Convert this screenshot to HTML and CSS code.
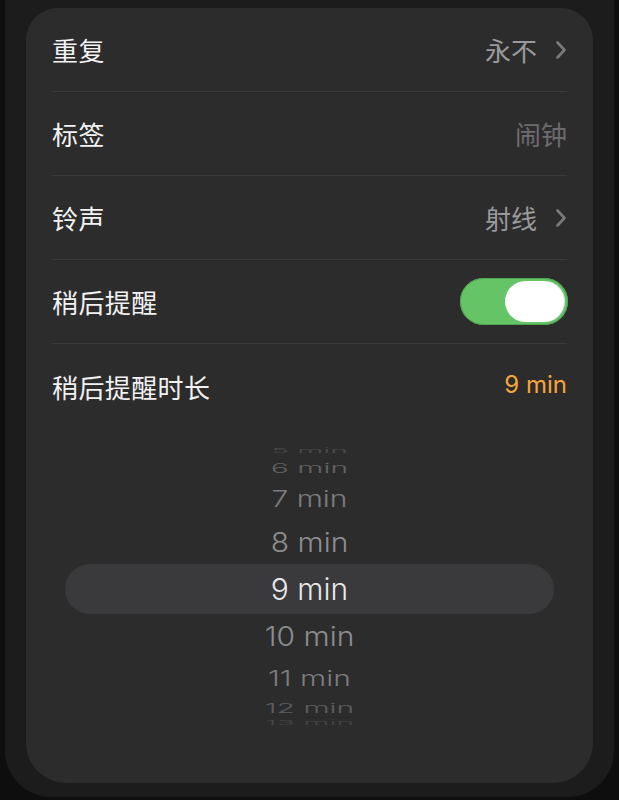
FILE: index.html
```html
<!DOCTYPE html>
<html lang="zh-CN">
    <head>
        <meta charset="UTF-8">
        <meta name="viewport" content="width=device-width, initial-scale=1.0">
        <title>编辑闹钟</title>
        <link rel="stylesheet" href="styles.css">
    </head>
    <body>
        <div class="frame">
            <div class="card">
                <div class="list">
                    <div class="row">
                        <span class="label">重复</span>
                        <span class="value">永不
                            <svg class="chevron" width="12" height="20" viewBox="0 0 12 20"><path d="M2.5 2.5 L9.5 10 L2.5 17.5" fill="none" stroke="#7a7a7c" stroke-width="2.6" stroke-linecap="round" stroke-linejoin="round"/></svg>
                        </span>
                    </div>
                    <div class="row">
                        <span class="label">标签</span>
                        <span class="value placeholder">闹钟</span>
                    </div>
                    <div class="row">
                        <span class="label">铃声</span>
                        <span class="value">射线
                            <svg class="chevron" width="12" height="20" viewBox="0 0 12 20"><path d="M2.5 2.5 L9.5 10 L2.5 17.5" fill="none" stroke="#7a7a7c" stroke-width="2.6" stroke-linecap="round" stroke-linejoin="round"/></svg>
                        </span>
                    </div>
                    <div class="row">
                        <span class="label">稍后提醒</span>
                        <span class="toggle"><span class="knob"></span></span>
                    </div>
                    <div class="row last">
                        <span class="label">稍后提醒时长</span>
                        <span class="value accent">9 min</span>
                    </div>
                </div>

                <div class="picker">
                    <div class="item i5"><span>5 min</span></div>
                    <div class="item i6"><span>6 min</span></div>
                    <div class="item i7"><span>7 min</span></div>
                    <div class="item i8"><span>8 min</span></div>
                    <div class="item selected"><span>9 min</span></div>
                    <div class="item i10"><span>10 min</span></div>
                    <div class="item i11"><span>11 min</span></div>
                    <div class="item i12"><span>12 min</span></div>
                    <div class="item i13"><span>13 min</span></div>
                </div>
            </div>
        </div>
    </body>
</html>
```

FILE: styles.css
```css
body {
    margin: 0;
    padding: 0;
    background-color: #0e0e0e;
    font-family: Inter, "Noto Sans CJK SC", sans-serif;
}
.frame {
    margin: 0 5px;
    height: 797px;
    padding: 8px 21px 0;
    box-sizing: border-box;
    background-color: #1c1c1c;
    border-radius: 0 0 46px 46px;
}
.card {
    height: 775px;
    background-color: #2c2c2c;
    border-radius: 32px 32px 40px 40px;
}
.list {
    padding: 0 26px;
}
.row {
    height: 84px;
    display: flex;
    align-items: center;
    justify-content: space-between;
    border-bottom: 1px solid #3a3a3b;
    box-sizing: border-box;
}
.row.last {
    border-bottom: none;
}
.label {
    color: #f2f2f2;
    font-size: 26px;
    letter-spacing: 0.4px;
}
.value {
    display: flex;
    align-items: center;
    gap: 18px;
    color: #9a9a9d;
    font-size: 26px;
}
.value.placeholder {
    color: #6c6c6e;
}
.value.accent {
    color: #f7a53c;
    font-size: 24px;
    margin-top: -3px;
}
.chevron {
    display: block;
}
.toggle {
    width: 108px;
    height: 47px;
    border-radius: 24px;
    background-color: #64c466;
    box-shadow: inset 0 0 0 1px #4fa452;
    display: flex;
    align-items: center;
    justify-content: flex-end;
    padding: 0 3px;
    box-sizing: border-box;
    margin-right: -1px;
}
.knob {
    width: 60px;
    height: 41px;
    border-radius: 21px;
    background-color: #fff;
    box-shadow: inset -1px 0 1px rgba(0, 0, 0, 0.12);
}
.picker {
    padding: 16px 39px 0;
}
.item {
    display: flex;
    align-items: center;
    justify-content: center;
    font-size: 30px;
    font-weight: 300;
    color: #8a8a8c;
}
.item span {
    display: block;
    line-height: 1;
}
.i5 { height: 14px; color: #4a4a4b; }
.i5 span { transform: scaleY(0.22); }
.i6 { height: 20px; color: #626263; }
.i6 span { transform: scaleY(0.45); }
.i7 { height: 42px; color: #7c7c7e; }
.i7 span { transform: scaleY(0.74); }
.i8 { height: 44px; color: #8c8c8e; }
.i8 span { transform: scaleY(0.9); }
.selected {
    height: 50px;
    background-color: #3a3a3c;
    border-radius: 25px;
    color: #e8e8e8;
}
.i10 { height: 44px; color: #8c8c8e; }
.i10 span { transform: scaleY(0.9); }
.i11 { height: 40px; color: #7c7c7e; }
.i11 span { transform: scaleY(0.72); }
.i12 { height: 20px; color: #5c5c5d; }
.i12 span { transform: scaleY(0.44); }
.i13 { height: 10px; color: #444445; }
.i13 span { transform: scaleY(0.2); }
```
